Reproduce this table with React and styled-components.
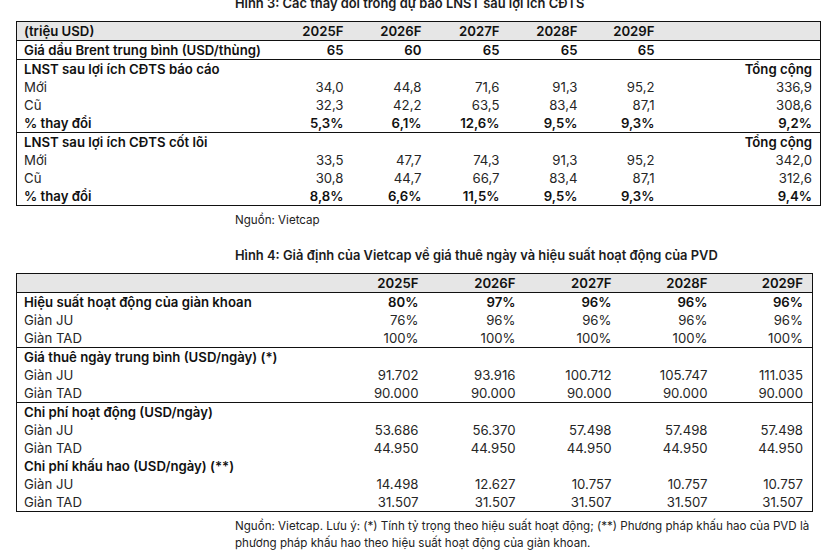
import React from "react";
import styled, { createGlobalStyle } from "styled-components";

const GlobalStyle = createGlobalStyle`
  html, body {
    margin: 0;
    padding: 0;
    background: #ffffff;
  }
  body {
    font-family: "Inter", "Noto Sans", sans-serif;
    color: #1c1c1c;
  }
`;

const Page = styled.div`
  width: 825px;
  height: 557px;
  overflow: hidden;
  padding-left: 16px;
  box-sizing: border-box;
`;

const Caption = styled.div`
  padding-left: 219px;
  font-size: 12.9px;
  font-weight: 600;
  line-height: 16px;
  height: 16px;
  white-space: nowrap;
  margin-top: ${(p) => p.$top || 0}px;
  margin-bottom: ${(p) => p.$bottom || 0}px;
`;

const Source = styled.div`
  padding-left: 219px;
  font-size: 11.6px;
  font-weight: 400;
  line-height: 17px;
  color: #222;
  white-space: nowrap;
  margin-top: ${(p) => p.$top || 0}px;
`;

const Table = styled.table`
  border-collapse: collapse;
  table-layout: fixed;
  width: ${(p) => p.$width}px;
  border: 1px solid #111;
  font-size: 13.2px;
`;

const HeadRow = styled.tr`
  background: #e6e6e6;
  border-bottom: 1px solid #111;
`;

const Row = styled.tr`
  border-bottom: ${(p) => (p.$line ? "1px solid #111" : "none")};
`;

const Cell = styled.td`
  height: 18px;
  padding: 0 ${(p) => p.$pr || 8}px 0 7px;
  line-height: 17px;
  font-weight: ${(p) => (p.$bold ? 600 : 400)};
  text-align: ${(p) => (p.$num ? "right" : "left")};
  white-space: nowrap;
  vertical-align: middle;
  color: ${(p) => (p.$bold ? "#111" : "#262626")};
`;

const t1Cols = [257, 78, 78, 78, 78, 77, 158];
const t2Cols = [314, 97, 97, 96, 96, 96];

const t1Rows = [
  { label: "Giá dầu Brent trung bình (USD/thùng)", bold: true, vals: ["65", "60", "65", "65", "65", ""], line: true },
  { label: "LNST sau lợi ích CĐTS báo cáo", bold: true, vals: ["", "", "", "", "", "Tổng cộng"] },
  { label: "Mới", vals: ["34,0", "44,8", "71,6", "91,3", "95,2", "336,9"] },
  { label: "Cũ", vals: ["32,3", "42,2", "63,5", "83,4", "87,1", "308,6"] },
  { label: "% thay đổi", bold: true, vals: ["5,3%", "6,1%", "12,6%", "9,5%", "9,3%", "9,2%"], line: true },
  { label: "LNST sau lợi ích CĐTS cốt lõi", bold: true, vals: ["", "", "", "", "", "Tổng cộng"] },
  { label: "Mới", vals: ["33,5", "47,7", "74,3", "91,3", "95,2", "342,0"] },
  { label: "Cũ", vals: ["30,8", "44,7", "66,7", "83,4", "87,1", "312,6"] },
  { label: "% thay đổi", bold: true, vals: ["8,8%", "6,6%", "11,5%", "9,5%", "9,3%", "9,4%"] },
];

const t2Rows = [
  { label: "Hiệu suất hoạt động của giàn khoan", bold: true, vals: ["80%", "97%", "96%", "96%", "96%"] },
  { label: "Giàn JU", vals: ["76%", "96%", "96%", "96%", "96%"] },
  { label: "Giàn TAD", vals: ["100%", "100%", "100%", "100%", "100%"], line: true },
  { label: "Giá thuê ngày trung bình (USD/ngày) (*)", bold: true, vals: ["", "", "", "", ""] },
  { label: "Giàn JU", vals: ["91.702", "93.916", "100.712", "105.747", "111.035"] },
  { label: "Giàn TAD", vals: ["90.000", "90.000", "90.000", "90.000", "90.000"], line: true },
  { label: "Chi phí hoạt động (USD/ngày)", bold: true, vals: ["", "", "", "", ""] },
  { label: "Giàn JU", vals: ["53.686", "56.370", "57.498", "57.498", "57.498"] },
  { label: "Giàn TAD", vals: ["44.950", "44.950", "44.950", "44.950", "44.950"] },
  { label: "Chi phí khấu hao (USD/ngày) (**)", bold: true, vals: ["", "", "", "", ""] },
  { label: "Giàn JU", vals: ["14.498", "12.627", "10.757", "10.757", "10.757"] },
  { label: "Giàn TAD", vals: ["31.507", "31.507", "31.507", "31.507", "31.507"] },
];

const years = ["2025F", "2026F", "2027F", "2028F", "2029F"];

const DataTable = ({ cols, head, rows, pr }) => (
  <Table $width={cols.reduce((a, b) => a + b, 0)}>
    <colgroup>
      {cols.map((w, i) => (
        <col key={i} style={{ width: w }} />
      ))}
    </colgroup>
    <tbody>
      <HeadRow>
        {head.map((h, i) => (
          <Cell key={i} $bold $num={i > 0} $pr={pr}>
            {h}
          </Cell>
        ))}
      </HeadRow>
      {rows.map((r, i) => (
        <Row key={i} $line={r.line}>
          <Cell $bold={r.bold}>{r.label}</Cell>
          {r.vals.map((v, j) => (
            <Cell key={j} $num $bold={r.bold} $pr={pr}>
              {v}
            </Cell>
          ))}
        </Row>
      ))}
    </tbody>
  </Table>
);

export default function App() {
  return (
    <>
      <GlobalStyle />
      <Page>
        <Caption $top={-4} $bottom={9}>
          Hình 3: Các thay đổi trong dự báo LNST sau lợi ích CĐTS
        </Caption>
        <DataTable
          cols={t1Cols}
          head={["(triệu USD)", ...years, ""]}
          rows={t1Rows}
          pr={8}
        />
        <Source $top={6}>Nguồn: Vietcap</Source>
        <Caption $top={19} $bottom={9}>
          Hình 4: Giả định của Vietcap về giá thuê ngày và hiệu suất hoạt động của PVD
        </Caption>
        <DataTable cols={t2Cols} head={["", ...years]} rows={t2Rows} pr={9} />
        <Source $top={6}>
          Nguồn: Vietcap. Lưu ý: (*) Tính tỷ trọng theo hiệu suất hoạt động; (**) Phương pháp khấu hao của PVD là
          <br />
          phương pháp khấu hao theo hiệu suất hoạt động của giàn khoan.
        </Source>
      </Page>
    </>
  );
}
